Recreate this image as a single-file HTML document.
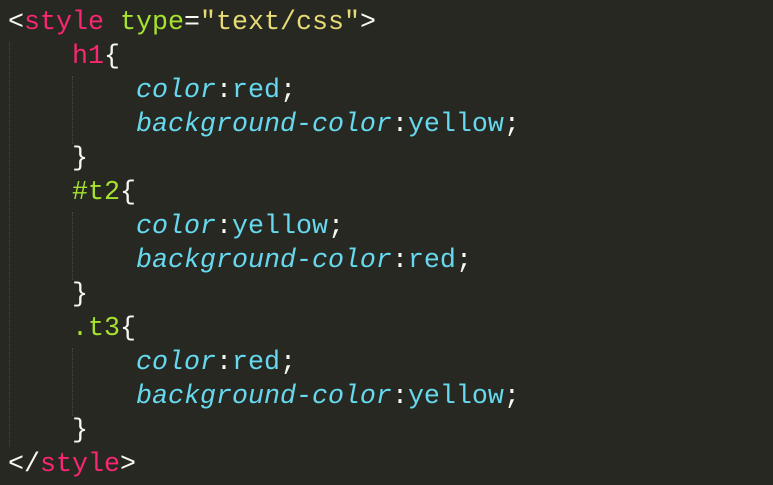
<!DOCTYPE html>
<html><head><meta charset="utf-8"><style>
html,body{margin:0;padding:0;background:#272822;width:773px;height:485px;overflow:hidden}
pre{margin:0;position:absolute;left:8px;top:6px;font-family:"Liberation Mono","DejaVu Sans Mono",monospace;font-size:26.67px;line-height:34px;color:#f8f8f2}
.t{color:#f92672}.a{color:#a6e22e}.s{color:#e6db74}.p{color:#66d9ef;font-style:italic}.v{color:#66d9ef}
.g{position:absolute;width:0;border-left:1px dotted #4a4a44}
</style></head><body>
<div class="g" style="left:9px;top:42px;height:405px"></div>
<div class="g" style="left:72px;top:76px;height:68px"></div>
<div class="g" style="left:72px;top:212px;height:68px"></div>
<div class="g" style="left:72px;top:348px;height:68px"></div>
<pre>&lt;<span class="t">style</span> <span class="a">type</span>=<span class="s">"text/css"</span>&gt;
    <span class="t">h1</span>{
        <span class="p">color</span>:<span class="v">red</span>;
        <span class="p">background-color</span>:<span class="v">yellow</span>;
    }
    <span class="a">#t2</span>{
        <span class="p">color</span>:<span class="v">yellow</span>;
        <span class="p">background-color</span>:<span class="v">red</span>;
    }
    <span class="a">.t3</span>{
        <span class="p">color</span>:<span class="v">red</span>;
        <span class="p">background-color</span>:<span class="v">yellow</span>;
    }
&lt;/<span class="t">style</span>&gt;</pre>
</body></html>
